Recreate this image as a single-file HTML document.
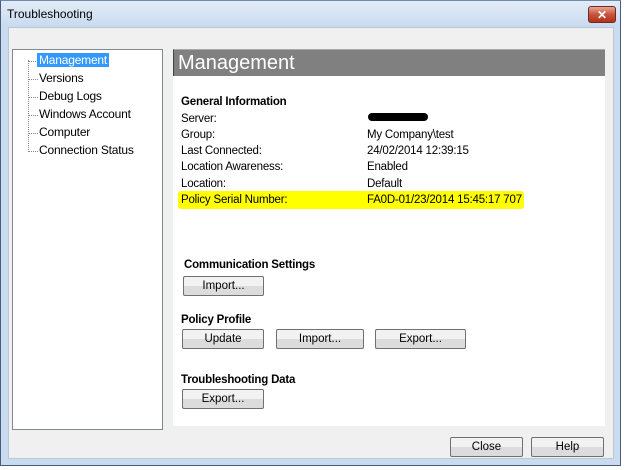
<!DOCTYPE html><html><head><style>
body{margin:0;width:625px;height:470px;overflow:hidden;background:#fff;font-family:"Liberation Sans",sans-serif;font-size:12px;}
.win{position:absolute;left:0;top:0;width:621px;height:466px;background:#c9dbef;border:1px solid #4a5d78;border-top-color:#6d8aad;box-sizing:border-box;}
.title{position:absolute;left:0;top:0;width:619px;height:25px;background:linear-gradient(#e3ecf7,#c9dbef);}
.title span{position:absolute;left:6px;top:6px;font-size:12px;color:#000;}
.xbtn{position:absolute;left:587px;top:5px;width:28px;height:17px;border:1px solid #6e2a21;border-radius:3px;background:linear-gradient(#e8a596,#c7543e 50%,#b3311b);color:#fff;font-weight:bold;text-align:center;line-height:16px;font-size:12px;box-sizing:border-box;}
.body{position:absolute;left:7px;top:26px;width:606px;height:432px;background:#f0f0f0;border:1px solid #b9c7d6;box-sizing:border-box;}
.tree{position:absolute;left:12px;top:49px;width:151px;height:381px;background:#fff;border:1px solid #828790;box-sizing:border-box;}
.ti{position:absolute;left:26px;font-size:12px;letter-spacing:-0.2px}
.dot{position:absolute;left:16px;width:9px;border-top:1px dotted #888;}
.panel{position:absolute;left:173px;top:49px;width:432px;height:377px;background:#fff;}
.hdr{position:absolute;left:173px;top:49px;width:432px;height:27px;background:#808080;color:#fff;font-size:20px;line-height:26px;border-left:1px solid #444;border-top:1px solid #aaa;box-sizing:border-box;padding-left:4px;}
.t{position:absolute;white-space:nowrap;font-size:11.5px;letter-spacing:-0.2px;margin-top:1.5px}
.b{font-weight:bold;}
.btn{position:absolute;height:20px;border:1px solid #707070;border-radius:2px;background:linear-gradient(#f2f2f2 50%,#dcdcdc 50%);box-sizing:border-box;text-align:center;line-height:19px;font-size:11.5px;}
</style></head><body>
<div class="win"><div class="title"><span>Troubleshooting</span></div><div class="xbtn">✕</div><div class="body"></div></div>
<div class="tree">
<div style="position:absolute;left:15px;top:10px;height:92px;border-left:1px dotted #888"></div>
<div class="dot" style="top:11px"></div><div class="ti" style="top:3px;background:#3399ff;color:#fff;padding:0 2px;left:24px">Management</div>
<div class="dot" style="top:29px"></div><div class="ti" style="top:21px">Versions</div>
<div class="dot" style="top:47px"></div><div class="ti" style="top:39px">Debug Logs</div>
<div class="dot" style="top:65px"></div><div class="ti" style="top:57px">Windows Account</div>
<div class="dot" style="top:83px"></div><div class="ti" style="top:75px">Computer</div>
<div class="dot" style="top:101px"></div><div class="ti" style="top:93px">Connection Status</div>
</div>
<div class="panel"></div>
<div class="hdr">Management</div>
<div style="position:absolute;left:178px;top:191px;width:346px;height:18px;background:#ffff00;border-radius:3px"></div>
<div class="t b" style="left:181px;top:94px">General Information</div>
<div class="t" style="left:181px;top:111px">Server:</div>
<div style="position:absolute;left:368px;top:113px;width:60px;height:8px;background:#000;border-radius:4px"></div>
<div class="t" style="left:181px;top:127px">Group:</div><div class="t" style="left:367px;top:127px">My Company\test</div>
<div class="t" style="left:181px;top:143px">Last Connected:</div><div class="t" style="left:367px;top:143px">24/02/2014 12:39:15</div>
<div class="t" style="left:181px;top:159px">Location Awareness:</div><div class="t" style="left:367px;top:159px">Enabled</div>
<div class="t" style="left:181px;top:176px">Location:</div><div class="t" style="left:367px;top:176px">Default</div>
<div class="t" style="left:181px;top:192px">Policy Serial Number:</div><div class="t" style="left:367px;top:192px">FA0D-01/23/2014 15:45:17 707</div>
<div class="t b" style="left:184px;top:257px">Communication Settings</div>
<div class="btn" style="left:183px;top:276px;width:81px">Import...</div>
<div class="t b" style="left:181px;top:312px">Policy Profile</div>
<div class="btn" style="left:182px;top:329px;width:82px">Update</div>
<div class="btn" style="left:276px;top:329px;width:88px">Import...</div>
<div class="btn" style="left:375px;top:329px;width:91px">Export...</div>
<div class="t b" style="left:181px;top:372px">Troubleshooting Data</div>
<div class="btn" style="left:182px;top:389px;width:82px">Export...</div>
<div class="btn" style="left:450px;top:437px;width:73px">Close</div>
<div class="btn" style="left:531px;top:437px;width:73px">Help</div>
</body></html>
